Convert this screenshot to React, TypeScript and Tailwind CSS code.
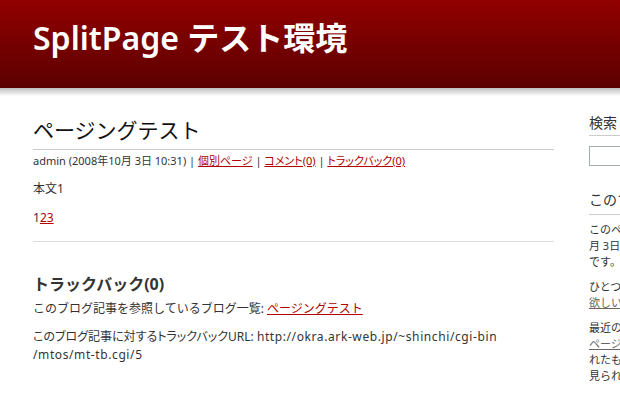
export default function App() {
  const jp = { fontFamily: '"Noto Sans", "Noto Sans CJK JP", sans-serif' };
  return (
    <div className="min-h-screen w-[620px] overflow-hidden bg-white text-[#333]" style={jp}>
      <header className="h-[88px] bg-gradient-to-b from-[#920000] to-[#5c0000] pl-[33px] pt-[18px]">
        <h1 className="text-[32px] font-semibold leading-[40px] text-white whitespace-nowrap">SplitPage テスト環境</h1>
      </header>
      <div className="h-[8px] bg-gradient-to-b from-[#bdbdbd] to-white" />

      <div className="flex pl-[33px]">
        <main className="w-[521px] shrink-0 pt-[19px]">
          <h2 className="border-b border-[#cccccc] pb-[4px] text-[21px] font-normal leading-[30px] text-[#111]">ページングテスト</h2>
          <div className="mt-[3px] text-[11px] leading-[16px] whitespace-nowrap [font-feature-settings:'palt']">
            admin (2008年10月 3日 10:31) | <a className="text-[#b00000] underline">個別ページ</a> | <a className="text-[#b00000] underline">コメント(0)</a> | <a className="text-[#b00000] underline">トラックバック(0)</a>
          </div>
          <p className="mt-[11px] text-[12px] leading-[18px]">本文1</p>
          <p className="mt-[11px] text-[12px] leading-[18px]">1<a className="text-[#b00000] underline">23</a></p>
          <div className="mt-[14px] border-t border-[#dddddd]" />

          <h3 className="mt-[31px] text-[16px] font-bold leading-[22px]">トラックバック(0)</h3>
          <p className="mt-[5px] text-[12px] leading-[18px]">
            このブログ記事を参照しているブログ一覧: <a className="text-[#b00000] underline">ページングテスト</a>
          </p>
          <p className="mt-[10px] text-[12px] leading-[18px] whitespace-nowrap">
            <span className="[font-feature-settings:'palt']">このブログ記事に対するトラックバックURL: </span>
            <span className="tracking-[0.05em]">http://okra.ark-web.jp/~shinchi/cgi-bin</span>
            <br />
            <span className="tracking-[0.05em]">/mtos/mt-tb.cgi/5</span>
          </p>
        </main>

        <aside className="ml-[35px] w-[170px] shrink-0 pt-[17px]">
          <h4 className="border-b border-[#cccccc] pb-[2px] text-[14px] leading-[20px]">検索</h4>
          <div className="mt-[10px] h-[20px] w-[150px] border border-[#a5acb2]" />
          <h4 className="mt-[24px] border-b border-[#cccccc] pb-[4px] text-[14px] leading-[20px] whitespace-nowrap">このブログ記事について</h4>
          <p className="mt-[7px] text-[11px] leading-[16px] whitespace-nowrap">
            このページは、adminが2008年10
            <br />
            月 3日 10:31に書いたブログ記事
            <br />
            です。
          </p>
          <p className="mt-[9px] text-[11px] leading-[16px] whitespace-nowrap">
            ひとつ前のブログ記事は「
            <br />
            <a className="text-[#666] underline">欲しいもの</a>」です。
          </p>
          <p className="mt-[9px] text-[11px] leading-[16px] whitespace-nowrap">
            最近のコンテンツはメイン
            <br />
            <a className="text-[#666] underline">ページ</a>で見られます。過去に書か
            <br />
            れたものはアーカイブのページで
            <br />
            見られます。
          </p>
        </aside>
      </div>
    </div>
  );
}
